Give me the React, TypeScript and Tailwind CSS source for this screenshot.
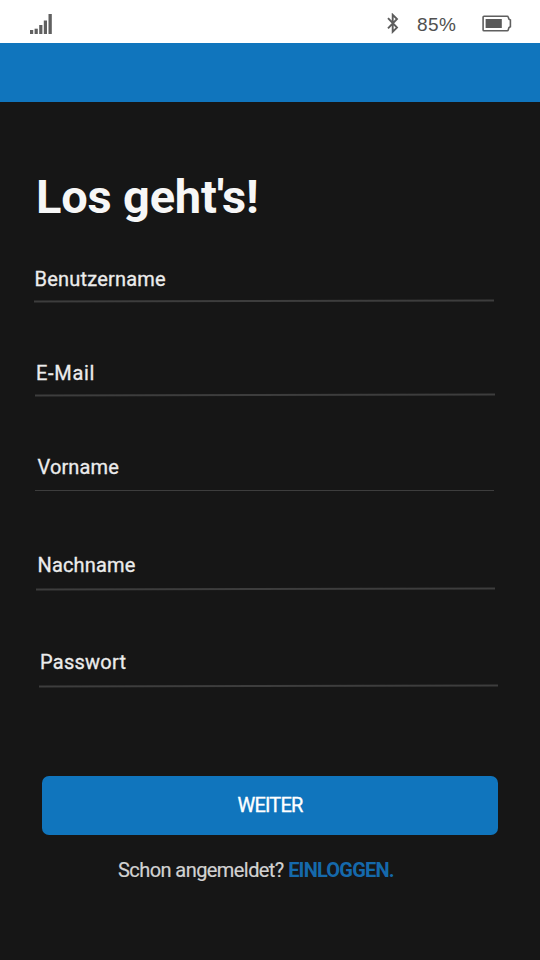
import clsx from 'clsx'

interface Field {
  name: string
  label: string
  className: string
  labelClassName: string
  lineClassName: string
}

// Spacing differs slightly from field to field, so it is kept with the data
const fields: Field[] = [
  {
    name: 'username',
    label: 'Benutzername',
    className: 'ml-[34px] mt-[42px] w-[460px]',
    labelClassName: 'pl-[0.5px] tracking-[0.2px]',
    lineClassName: 'mt-[9px] h-[1.5px] -rotate-[0.14deg]',
  },
  {
    name: 'email',
    label: 'E-Mail',
    className: 'ml-[35px] mt-[59.5px] w-[460px]',
    labelClassName: 'pl-px tracking-[0.7px]',
    lineClassName: 'mt-[9px] h-[1.5px] -rotate-[0.14deg]',
  },
  {
    name: 'firstname',
    label: 'Vorname',
    className: 'ml-[35px] mt-[59.5px] w-[459px]',
    labelClassName: 'pl-[2.5px] tracking-[0.12px]',
    lineClassName: 'mt-[10.5px] h-px',
  },
  {
    name: 'lastname',
    label: 'Nachname',
    className: 'ml-[36px] mt-[62.5px] w-[459px]',
    labelClassName: 'pl-[1.5px] tracking-[0.15px]',
    lineClassName: 'mt-[10.5px] h-[1.5px] -rotate-[0.14deg]',
  },
  {
    name: 'password',
    label: 'Passwort',
    className: 'ml-[39px] mt-[61px] w-[459px]',
    labelClassName: 'pl-px tracking-[0.25px]',
    lineClassName: 'mt-[10.5px] h-[1.5px] -rotate-[0.14deg]',
  },
]

function SignalIcon() {
  return (
    <svg width="22" height="20" viewBox="0 0 22 20" fill="#606060">
      <rect x="0" y="16" width="3.2" height="4" />
      <rect x="4.6" y="14.7" width="3.2" height="5.3" />
      <rect x="9.2" y="11" width="3.2" height="9" />
      <rect x="13.8" y="6.5" width="3.2" height="13.5" />
      <rect x="18.5" y="0" width="3.3" height="20" />
    </svg>
  )
}

function BluetoothIcon() {
  return (
    <svg width="12" height="21" viewBox="0 0 12 21" fill="none" stroke="#5c5c5c" strokeWidth="1.9">
      <path d="M1 5.2 10 14.6 5.7 18.8V1.8L10 6 1 15.4" />
    </svg>
  )
}

function BatteryIcon() {
  return (
    <svg width="30" height="17" viewBox="0 0 30 17" fill="none">
      <path
        d="M2 1.2H25.3Q26 1.2 26.2 2L27 4.2 28.4 5V11.8L27 12.6 26.2 15Q26 15.8 25.3 15.8H2Q1.1 15.8 1.1 15V2Q1.1 1.2 2 1.2Z"
        stroke="#5f5f5f"
        strokeWidth="1.6"
      />
      <rect x="3.6" y="4" width="16.2" height="9" fill="#5a5a5a" />
    </svg>
  )
}

function StatusBar() {
  return (
    <div className="flex h-[43px] items-start bg-white">
      <div className="ml-[30px] mt-[14px]">
        <SignalIcon />
      </div>
      <div className="ml-[335px] mt-[13px]">
        <BluetoothIcon />
      </div>
      <span className="ml-[18px] mt-[13px] w-[65px] font-['Liberation_Sans',sans-serif] text-[19px] leading-6 tracking-[0.4px] text-[#505050]">
        85%
      </span>
      <div className="mt-[15px]">
        <BatteryIcon />
      </div>
    </div>
  )
}

export default function App() {
  return (
    <div className="flex h-[960px] w-[540px] flex-col overflow-hidden bg-[#161616] font-[Roboto,sans-serif] text-[#ececec]">
      <StatusBar />
      <header className="h-[59px] bg-[#1075bd]" />

      <main className="flex flex-col">
        <h1 className="ml-[36px] mt-[67px] text-[47px] font-bold leading-[56px] tracking-[-0.2px] text-[#f7f7f7]">
          Los geht's!
        </h1>

        {fields.map((field) => (
          <div key={field.name} className={clsx('flex flex-col', field.className)}>
            <label
              className={clsx(
                'h-6 text-[20px] leading-6 [-webkit-text-stroke:0.3px_currentColor]',
                field.labelClassName
              )}
            >
              {field.label}
            </label>
            <div className={clsx('bg-[#3d3d3d]', field.lineClassName)} />
          </div>
        ))}

        <button className="ml-[42px] mt-[89.5px] h-[59px] w-[456px] rounded-[7px] bg-[#1075bd] text-[20px] leading-6 tracking-[-0.8px] text-white [-webkit-text-stroke:0.35px_currentColor]">
          WEITER
        </button>

        <p className="ml-[118px] mt-[23px] whitespace-nowrap text-[20px] leading-6 tracking-[-0.57px] text-[#d2d2d2]">
          <span className="[-webkit-text-stroke:0.2px_currentColor]">Schon angemeldet?</span>{' '}
          <a className="font-bold tracking-[-0.8px] text-[#1569ab]">EINLOGGEN.</a>
        </p>
      </main>
    </div>
  )
}
